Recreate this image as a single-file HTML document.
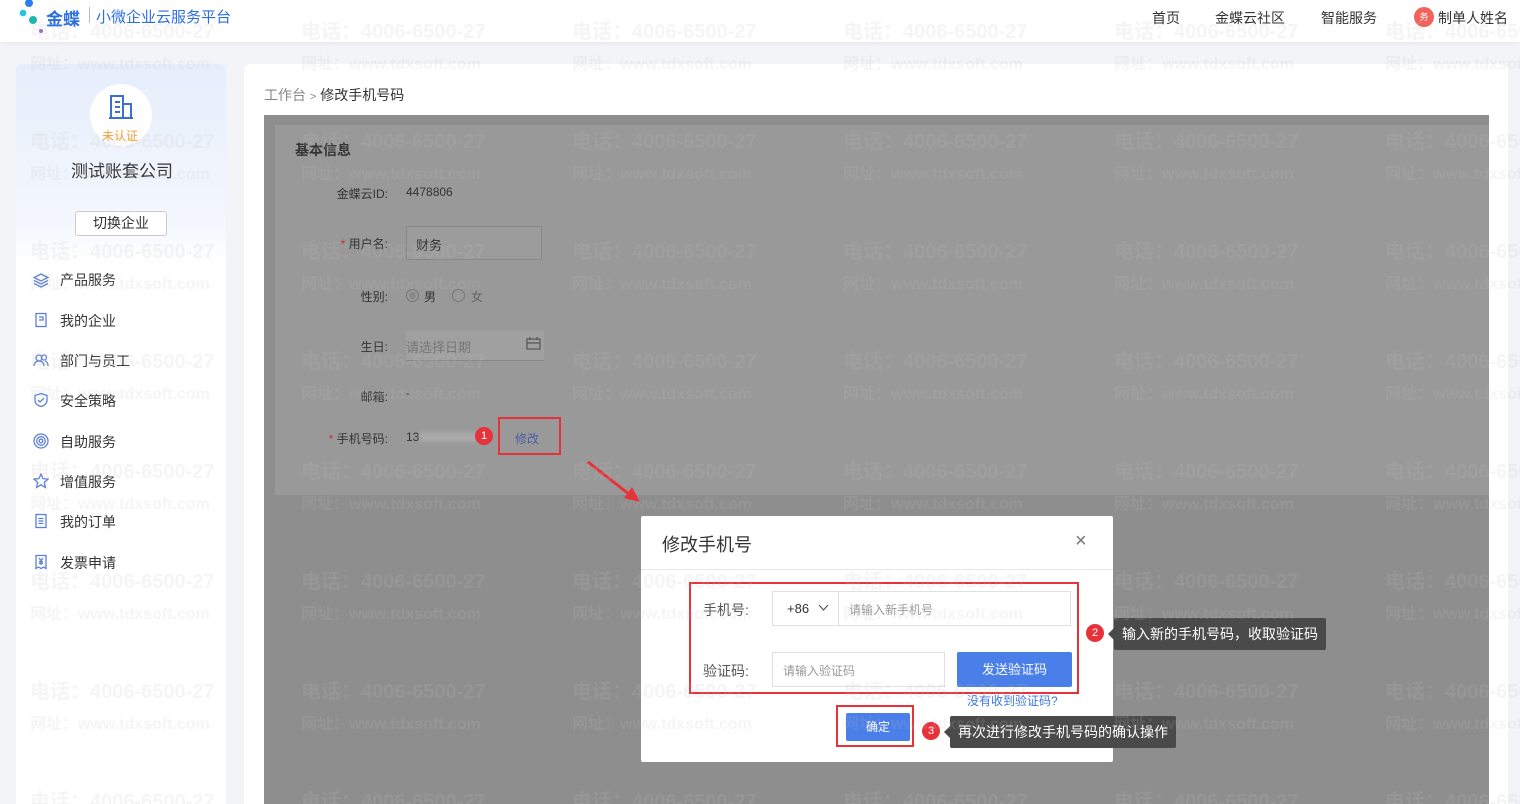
<!DOCTYPE html>
<html><head><meta charset="utf-8"><style>
*{margin:0;padding:0;box-sizing:border-box}
html{width:1520px;height:804px;overflow:hidden}
body{width:1520px;height:804px;overflow:hidden;background:#f3f4f7;font-family:"Liberation Sans","Noto Sans CJK SC",sans-serif;color:#333;position:relative;font-size:14px}
.abs{position:absolute}
.hdr{left:0;top:0;width:1520px;height:42px;background:#fff;box-shadow:0 1px 4px rgba(0,0,0,.06)}
.side{left:16px;top:64px;width:210px;height:740px;background:linear-gradient(#e6eefc 0,#f4f7fd 160px,#fff 200px);border-radius:6px 6px 0 0}
.main{left:244px;top:64px;width:1264px;height:740px;background:#fff;border-radius:6px 6px 0 0}
.ov{left:264px;top:115px;width:1225px;height:689px;background:#8e8e8e}
.card{left:275px;top:125px;width:1214px;height:370px;background:#999}
.menu div{position:absolute;left:60px;font-size:14px;color:#333}
.ic{position:absolute;left:33px;width:16px;height:16px}
.lbl{position:absolute;font-size:12px;color:#333;text-align:right;width:100px}
.wm{position:absolute;font-weight:bold;font-size:20px;color:rgba(190,190,190,.16);white-space:nowrap;pointer-events:none}
.wm2{font-weight:bold;font-size:16px}
.modal{left:641px;top:516px;width:472px;height:246px;background:#fff;border-radius:2px}
.red{position:absolute;border:2px solid #e8323a}
.badge{position:absolute;width:18px;height:18px;border-radius:50%;background:#e8323a;color:#fff;font-size:11px;text-align:center;line-height:18px}
.tip{position:absolute;background:#4a4a4a;color:#fff;font-size:14px;height:32px;line-height:32px;padding:0 8px;border-radius:2px}
.tip:before{content:"";position:absolute;left:-6px;top:10px;border:6px solid transparent;border-left:0;border-right-color:#4a4a4a}
#wm{position:absolute;left:0;top:0;width:1520px;height:804px;overflow:hidden}
</style></head><body>
<div class="abs hdr"></div>
<svg class="abs" style="left:18px;top:0" width="26" height="36"><circle cx="11" cy="3" r="4" fill="#2c7ef0"/><circle cx="5" cy="13" r="3.3" fill="#27c2e0"/><circle cx="15" cy="20" r="4" fill="#1fb8ad"/><circle cx="23" cy="31" r="2" fill="#9a63d9"/></svg>
<div class="abs" style="left:46px;top:5px;font-size:17px;font-weight:bold;color:#2d6fe0">金蝶</div>
<div class="abs" style="left:89px;top:7px;width:1px;height:16px;background:#bbb"></div>
<div class="abs" style="left:96px;top:6px;font-size:15px;color:#2d6fe0">小微企业云服务平台</div>
<div class="abs" style="left:1152px;top:8px;font-size:14px">首页</div>
<div class="abs" style="left:1215px;top:8px;font-size:14px">金蝶云社区</div>
<div class="abs" style="left:1321px;top:8px;font-size:14px">智能服务</div>
<div class="abs" style="left:1414px;top:7px;width:20px;height:20px;border-radius:50%;background:#f0625a;color:#fff;font-size:9px;text-align:center;line-height:20px">务</div>
<div class="abs" style="left:1438px;top:8px;font-size:14px">制单人姓名</div>

<div class="abs side"></div>
<div class="abs" style="left:90px;top:84px;width:62px;height:62px;border-radius:50%;background:#fff"></div>
<svg class="abs" style="left:108px;top:94px" width="26" height="26" fill="none" stroke="#3d6fd0" stroke-width="2"><path d="M3 2h12v22H3zM15 10h8v14h-8M7 8h5M7 13h5M7 18h5M1 24h24"/></svg>
<div class="abs" style="left:102px;top:127px;font-size:12px;color:#f0a030">未认证</div>
<div class="abs" style="left:71px;top:157px;font-size:17px">测试账套公司</div>
<div class="abs" style="left:75px;top:211px;width:92px;height:25px;border:1px solid #ccc;border-radius:3px;background:#fff;text-align:center;line-height:23px;font-size:14px">切换企业</div>
<div class="menu">
<div style="top:270px">产品服务</div><div style="top:311px">我的企业</div><div style="top:351px">部门与员工</div><div style="top:391px">安全策略</div><div style="top:432px">自助服务</div><div style="top:472px">增值服务</div><div style="top:512px">我的订单</div><div style="top:553px">发票申请</div>
</div>
<svg class="ic" style="top:272px" fill="none" stroke="#5b7fd6" stroke-width="1.3" viewBox="0 0 16 16"><path d="M8 2l7 3.5-7 3.5-7-3.5zM1 8.5l7 3.5 7-3.5M1 11.5l7 3.5 7-3.5"/></svg>
<svg class="ic" style="top:312px" fill="none" stroke="#5b7fd6" stroke-width="1.3" viewBox="0 0 16 16"><rect x="3" y="1.5" width="10" height="13"/><path d="M6 5h4v3H6"/></svg>
<svg class="ic" style="top:352px" fill="none" stroke="#5b7fd6" stroke-width="1.3" viewBox="0 0 16 16"><circle cx="6" cy="6" r="3"/><circle cx="11" cy="5.5" r="2.5"/><path d="M1 14c0-3 2-5 5-5s5 2 5 5M12 9c2 .5 3 2.5 3 5"/></svg>
<svg class="ic" style="top:392px" fill="none" stroke="#5b7fd6" stroke-width="1.3" viewBox="0 0 16 16"><path d="M8 1.5l6 2v5c0 3-3 5.5-6 6-3-.5-6-3-6-6v-5z"/><path d="M5 8l2 2 4-4"/></svg>
<svg class="ic" style="top:433px" fill="none" stroke="#5b7fd6" stroke-width="1.3" viewBox="0 0 16 16"><circle cx="8" cy="8" r="7"/><circle cx="8" cy="8" r="4.3"/><circle cx="8" cy="8" r="1.8"/></svg>
<svg class="ic" style="top:473px" fill="none" stroke="#5b7fd6" stroke-width="1.3" viewBox="0 0 16 16"><path d="M8 1l2.1 4.6 5 .5-3.8 3.3 1.1 5L8 11.8 3.6 14.4l1.1-5L.9 6.1l5-.5z"/></svg>
<svg class="ic" style="top:513px" fill="none" stroke="#5b7fd6" stroke-width="1.3" viewBox="0 0 16 16"><rect x="3" y="1.5" width="10" height="13"/><path d="M5.5 5.5h5M5.5 8h5M5.5 10.5h5"/></svg>
<svg class="ic" style="top:554px" fill="none" stroke="#5b7fd6" stroke-width="1.3" viewBox="0 0 16 16"><path d="M3 1.5h10v13l-2.5-1.5L8 14.5 5.5 13 3 14.5z"/><path d="M6 4l2 2.5L10 4M8 6.5V11M6 7.5h4M6 9.3h4"/></svg>

<div class="abs main"></div>
<div class="abs" style="left:264px;top:85px;font-size:14px;color:#888">工作台 <span style="font-size:11px">&gt;</span> <span style="color:#333">修改手机号码</span></div>
<div class="abs ov"></div>
<div class="abs card"></div>
<div class="abs" style="left:295px;top:140px;font-size:14px;font-weight:bold;color:#333">基本信息</div>
<div class="lbl" style="left:288px;top:185px">金蝶云ID:</div><div class="abs" style="left:406px;top:185px;font-size:12px">4478806</div>
<div class="lbl" style="left:288px;top:235px"><span style="color:#c33">* </span>用户名:</div>
<div class="abs" style="left:406px;top:226px;width:136px;height:34px;border:1px solid #888;background:#9c9c9c;font-size:13px;padding:8px 9px">财务</div>
<div class="lbl" style="left:288px;top:288px">性别:</div>
<div class="abs" style="left:406px;top:289px;width:13px;height:13px;border-radius:50%;border:1px solid #777;background:#888;box-shadow:inset 0 0 0 2px #9a9a9a"></div>
<div class="abs" style="left:424px;top:288px;font-size:12px">男</div>
<div class="abs" style="left:452px;top:289px;width:13px;height:13px;border-radius:50%;border:1px solid #777"></div>
<div class="abs" style="left:471px;top:288px;font-size:12px;color:#666">女</div>
<div class="lbl" style="left:288px;top:338px">生日:</div>
<div class="abs" style="left:406px;top:330px;width:138px;height:31px;border-bottom:1px solid #888;background:#a0a0a0;font-size:13px;color:#777;padding:7px 0">请选择日期</div>
<svg class="abs" style="left:526px;top:337px" width="15" height="14" fill="none" stroke="#555" stroke-width="1.2"><rect x="1" y="2" width="13" height="10"/><path d="M1 6h13M4 0v3M11 0v3"/></svg>
<div class="lbl" style="left:288px;top:388px">邮箱:</div><div class="abs" style="left:406px;top:386px;font-size:12px">-</div>
<div class="lbl" style="left:288px;top:430px"><span style="color:#c33">* </span>手机号码:</div>
<div class="abs" style="left:406px;top:430px;font-size:12px">13</div>
<div class="abs" style="left:420px;top:432px;width:58px;height:10px;background:#aaa;filter:blur(2px)"></div>
<div class="badge" style="left:475px;top:427px">1</div>
<div class="red" style="left:498px;top:417px;width:63px;height:38px"></div>
<div class="abs" style="left:515px;top:430px;font-size:12px;color:#4a5ea8">修改</div>
<svg class="abs" style="left:586px;top:460px" width="56" height="44"><path d="M2 2L48 38" stroke="#e8323a" stroke-width="3"/><path d="M38 38L54 42 46 27z" fill="#e8323a"/></svg>

<div class="abs modal"></div>
<div class="abs" style="left:662px;top:531px;font-size:18px;color:#333">修改手机号</div>
<div class="abs" style="left:1075px;top:530px;font-size:20px;color:#777;font-weight:300">×</div>
<div class="abs" style="left:641px;top:569px;width:472px;height:1px;background:#e8e8e8"></div>
<div class="red" style="left:689px;top:582px;width:390px;height:112px"></div>
<div class="abs" style="left:703px;top:600px;font-size:14px;color:#555">手机号:</div>
<div class="abs" style="left:772px;top:591px;width:299px;height:35px;border:1px solid #e0e0e0"></div>
<div class="abs" style="left:838px;top:591px;width:1px;height:35px;background:#e0e0e0"></div>
<div class="abs" style="left:787px;top:601px;font-size:13px;color:#333">+86</div>
<svg class="abs" style="left:818px;top:604px" width="11" height="8" fill="none" stroke="#555" stroke-width="1.2"><path d="M1 1l4.5 5L10 1"/></svg>
<div class="abs" style="left:849px;top:601px;font-size:12px;color:#999">请输入新手机号</div>
<div class="abs" style="left:703px;top:661px;font-size:14px;color:#555">验证码:</div>
<div class="abs" style="left:772px;top:652px;width:173px;height:35px;border:1px solid #e0e0e0"></div>
<div class="abs" style="left:783px;top:662px;font-size:12px;color:#999">请输入验证码</div>
<div class="abs" style="left:957px;top:652px;width:115px;height:35px;background:#4a7ee8;border-radius:2px;color:#fff;font-size:13px;text-align:center;line-height:35px">发送验证码</div>
<div class="abs" style="left:967px;top:692px;font-size:12px;color:#3d78e0">没有收到验证码?</div>
<div class="red" style="left:836px;top:705px;width:78px;height:42px"></div>
<div class="abs" style="left:846px;top:713px;width:64px;height:28px;background:#4a7ee8;border-radius:2px;color:#fff;font-size:12px;text-align:center;line-height:28px">确定</div>
<div class="badge" style="left:1086px;top:624px">2</div>
<div class="tip" style="left:1114px;top:618px">输入新的手机号码，收取验证码</div>
<div class="badge" style="left:922px;top:722px">3</div>
<div class="tip" style="left:950px;top:716px">再次进行修改手机号码的确认操作</div>

<div id="wm"></div>
<script>
var h='';var xs=[30,301,572,843,1114,1385],ys=[15,125,235,345,455,565,675,785];
xs.forEach(function(x){ys.forEach(function(y){h+='<div class="wm" style="left:'+x+'px;top:'+y+'px">电话：4006-6500-27</div><div class="wm wm2" style="left:'+x+'px;top:'+(y+35)+'px">网址：www.tdxsoft.com</div>';});});
document.getElementById('wm').innerHTML=h;
</script>
</body></html>
